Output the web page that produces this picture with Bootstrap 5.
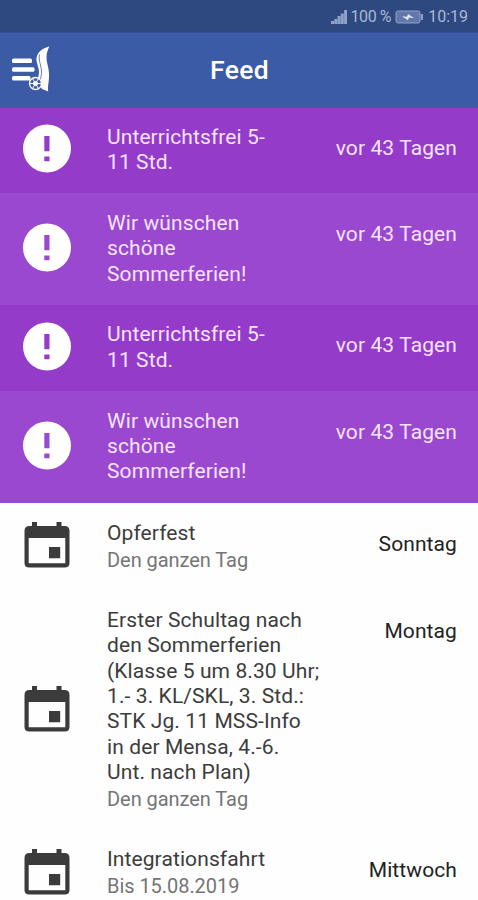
<!DOCTYPE html>
<html lang="de">
<head>
<meta charset="utf-8">
<meta name="viewport" content="width=device-width, initial-scale=1">
<title>Feed</title>
<link href="https://cdn.jsdelivr.net/npm/bootstrap@5.3.0/dist/css/bootstrap.min.css" rel="stylesheet">
<style>
body{font-family:Roboto,sans-serif;background:#fefefe;height:900px;overflow:hidden}
.statusbar{height:32px;background:#2e4880;color:#a9b8d6;font-size:16px;padding:2px 10px 0 0;line-height:30px}
.percent{letter-spacing:-.4px;margin-left:2px}
.appbar{height:76px;background:#3b5ba7;color:#fff;padding-left:12px;border-top:1px solid #355398}
.appbar h1{font-size:26.500px;font-weight:500;letter-spacing:.3px;padding-bottom:2px}
.logo{width:42px}
.spacer{width:53px}
.feed-item{height:112px;padding:17.800px 21px 0 23px;font-size:21px;line-height:25.3px;letter-spacing:.1px}
.short{height:85.4px;padding-top:16.900px}
.alert-a{background:#953bca;color:#f4e4fa}
.alert-b{background:#9b48d0;color:#f4e4fa}
.glyph{width:84px;padding-bottom:21px}
.short .glyph{padding-bottom:21px}
.when{padding-top:11px}
.event{background:#fefefe;color:#3c3c3c}
.event .when{color:#222}
.event .glyph{padding-bottom:20px}
.note{color:#757575;font-size:20px;margin-top:2px;letter-spacing:-.05px}
.one{height:87.6px}
.tall{height:239px}
</style>
</head>
<body>
<div class="statusbar d-flex justify-content-end align-items-center">
<svg width="17" height="15" viewBox="0 0 17 15" fill="#8fa2c8"><path d="M0 11h3v3H0zM3.300 9h2.900v5H3.300zM6.500 6h3v8h-3zM9.800 3.500h3v10.500h-3zM13.100 0H16v14h-2.900z"/></svg>
<span class="percent">100 %</span>
<svg class="mx-1" width="29" height="15" viewBox="0 0 29 15"><rect x="1" y="1" width="24" height="12" rx="2" fill="#6078ab" stroke="#8fa2c8"/><path d="M26 4h2v6h-2z" fill="#8fa2c8"/><path d="M7 6.300l5 .4 1-2.700 6 4-5-.4-1 2.700z" fill="#e0e7f5"/></svg>
<span>10:19</span>
</div>
<header class="appbar d-flex align-items-center">
<svg class="logo" width="42" height="52" viewBox="0 0 42 52" fill="#fff"><rect y="13.500" width="20" height="4.500" rx="1.500"/><rect y="22.200" width="22.500" height="4.500" rx="1.500"/><rect y="31" width="18.500" height="4.500" rx="1.500"/><path d="M37.500 1.500C30 3 25.500 7.500 24.500 13c-.6 4 2.500 9 2.500 14 0 3-1.300 5.500-1.200 8 .4 4 2 6.500 4.400 9l6 2.500c-.8-6 1.300-10.500.8-18.500C36.700 22 34.300 17 34.500 12c.1-4 1.300-7.500 3-10.500z"/><path d="M27.500 9.500c-1.500 6 2.500 12 2 19-.3 4-2 6-.5 11" fill="none" stroke="#3b5ba7" stroke-width=".8"/><circle cx="23.500" cy="38.500" r="6" fill="#3b5ba7" stroke="#fff" stroke-width="1.300"/><g stroke="#fff" stroke-width="1"><path d="M18 38.500h11M20.700 33.700l5.600 9.600M26.300 33.700l-5.600 9.600"/><circle cx="23.500" cy="38.500" r="2.100"/></g></svg>
<h1 class="flex-grow-1 text-center mb-0">Feed</h1><div class="spacer"></div>
</header>
<svg class="d-none"><defs>
<symbol id="info" viewBox="0 0 48 48"><path fill-rule="evenodd" fill="#fff" d="M24 0a24 24 0 1 0 0 48 24 24 0 0 0 0-48zM21.300 11.500h5.200v15.300h-5.200zM21.300 32h5.200v4.800h-5.200z"/></symbol>
<symbol id="cal" viewBox="0 0 45 46"><path fill="#3b3b3b" fill-rule="evenodd" d="M7.500 0h5v4h19.500V0h5v4H40q5 0 5 5v32q0 4.500-5 4.500H5Q0 45.500 0 41V9q0-5 5-5h2.500zM4.200 16v25.300h36.600V16zM24.500 25h11.200v11.200H24.500z"/></symbol>
</defs></svg>
<main>
<article class="feed-item short alert-a d-flex"><div class="glyph d-flex align-items-center"><svg width="48" height="49"><use href="#info"/></svg></div><div class="text-nowrap">Unterrichtsfrei 5-<br>11 Std.</div><div class="when ms-auto text-nowrap">vor 43 Tagen</div></article>
<article class="feed-item alert-b d-flex"><div class="glyph d-flex align-items-center"><svg width="48" height="49"><use href="#info"/></svg></div><div class="text-nowrap">Wir wünschen<br>schöne<br>Sommerferien!</div><div class="when ms-auto text-nowrap">vor 43 Tagen</div></article>
<article class="feed-item short alert-a d-flex"><div class="glyph d-flex align-items-center"><svg width="48" height="49"><use href="#info"/></svg></div><div class="text-nowrap">Unterrichtsfrei 5-<br>11 Std.</div><div class="when ms-auto text-nowrap">vor 43 Tagen</div></article>
<article class="feed-item alert-b d-flex"><div class="glyph d-flex align-items-center"><svg width="48" height="49"><use href="#info"/></svg></div><div class="text-nowrap">Wir wünschen<br>schöne<br>Sommerferien!</div><div class="when ms-auto text-nowrap">vor 43 Tagen</div></article>
<article class="feed-item event one d-flex"><div class="glyph d-flex align-items-center"><svg width="48" height="46"><use href="#cal"/></svg></div><div class="text-nowrap">Opferfest<div class="note">Den ganzen Tag</div></div><div class="when ms-auto text-nowrap">Sonntag</div></article>
<article class="feed-item event tall d-flex"><div class="glyph d-flex align-items-center"><svg width="48" height="46"><use href="#cal"/></svg></div><div class="text-nowrap">Erster Schultag nach<br>den Sommerferien<br>(Klasse 5 um 8.30 Uhr;<br>1.- 3. KL/SKL, 3. Std.:<br>STK Jg. 11 MSS-Info<br>in der Mensa, 4.-6.<br>Unt. nach Plan)<div class="note">Den ganzen Tag</div></div><div class="when ms-auto text-nowrap">Montag</div></article>
<article class="feed-item event one d-flex"><div class="glyph d-flex align-items-center"><svg width="48" height="46"><use href="#cal"/></svg></div><div class="text-nowrap">Integrationsfahrt<div class="note">Bis 15.08.2019</div></div><div class="when ms-auto text-nowrap">Mittwoch</div></article>
</main>
<script src="https://cdn.jsdelivr.net/npm/bootstrap@5.3.0/dist/js/bootstrap.bundle.min.js"></script>
</body>
</html>
